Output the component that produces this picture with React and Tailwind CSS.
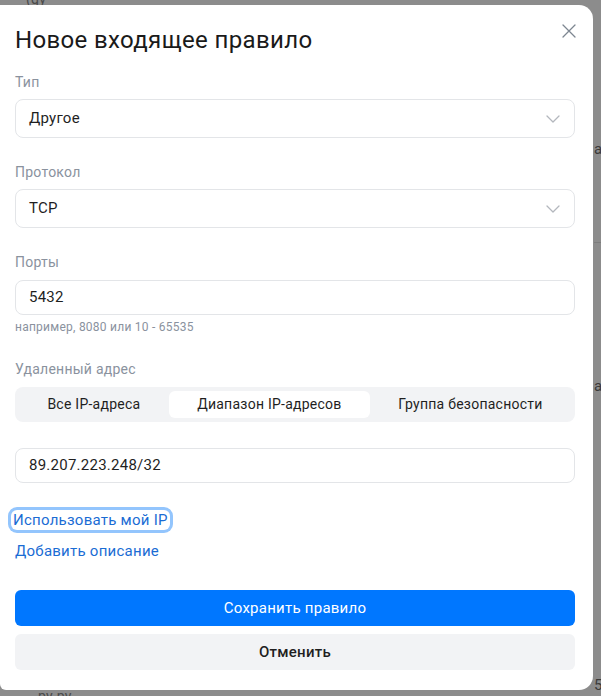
import { useState } from 'react';

const Chevron = () => (
  <svg width="14" height="8" viewBox="0 0 14 8" fill="none" className="shrink-0">
    <polyline points="1,1 7,7 13,1" stroke="#b3b7bd" strokeWidth="1.3" strokeLinecap="round" strokeLinejoin="round" />
  </svg>
);

const Label = ({ children, className = '' }) => (
  <div className={`text-[14px] leading-5 text-[#8a929e] ${className}`}>{children}</div>
);

const SelectBox = ({ value }) => (
  <div className="mt-[7px] h-[39px] rounded-lg border border-[#e3e5e8] flex items-center justify-between pl-[13px] pr-[14px]">
    <span className="text-[15px] text-[#1f1f1f]">{value}</span>
    <Chevron />
  </div>
);

const TextBox = ({ value, className = '' }) => (
  <div className={`h-[35px] rounded-lg border border-[#e3e5e8] flex items-center pl-[13px] ${className}`}>
    <span className="text-[15px] text-[#1f1f1f]">{value}</span>
  </div>
);

const tabs = ['Все IP-адреса', 'Диапазон IP-адресов', 'Группа безопасности'];

export default function App() {
  const [active, setActive] = useState(1);

  return (
    <div className="relative h-[696px] w-[601px] overflow-hidden bg-[#8c8c8c] font-['Roboto',sans-serif] tracking-[0.25px]">
      {/* faint page behind the overlay */}
      <div className="absolute left-[26px] top-[-11px] text-[14px] text-[#4a4a4a]">(gy</div>
      <div className="absolute left-[594px] top-[138px] text-[15px] text-[#3a3a3a]">ал</div>
      <div className="absolute left-[594px] top-[242px] h-px w-[10px] bg-[#7d7d7d]" />
      <div className="absolute left-[594px] top-[375px] text-[15px] text-[#3a3a3a]">ал</div>
      <div className="absolute left-[594px] top-[674px] text-[15px] text-[#3a3a3a]">5</div>
      <div className="absolute left-[38px] top-[686px] text-[14px] text-[#4a4a4a]">ру ру</div>

      <div className="relative mt-[5px] w-[593px] rounded-r-[14px] rounded-bl-[6px] bg-white pl-[15px] pr-[18px] pt-[21px] pb-[20px]">
        <div className="flex items-start justify-between">
          <h1 className="text-[24px] leading-[28px] font-normal tracking-[0.35px] text-[#1a1a1a]">Новое входящее правило</h1>
          <button className="mr-[-5px] mt-[-6px] p-1 text-[#7d8691]">
            <svg width="14" height="14" viewBox="0 0 14 14" fill="none">
              <path d="M1 1 13 13M13 1 1 13" stroke="currentColor" strokeWidth="1.3" strokeLinecap="round" />
            </svg>
          </button>
        </div>

        <Label className="mt-[18px]">Тип</Label>
        <SelectBox value="Другое" />

        <Label className="mt-[24px]">Протокол</Label>
        <SelectBox value="TCP" />

        <Label className="mt-[24px]">Порты</Label>
        <TextBox value="5432" className="mt-[8px]" />
        <div className="mt-[4px] text-[12px] leading-4 text-[#8a929e]">например, 8080 или 10 - 65535</div>

        <Label className="mt-[24px]">Удаленный адрес</Label>
        <div className="mt-[8px] flex h-[35px] rounded-lg bg-[#f2f3f5] p-[4px]">
          {tabs.map((t, i) => (
            <button
              key={t}
              onClick={() => setActive(i)}
              className={`flex-auto rounded-md text-[14px] text-[#1f1f1f] ${i === active ? 'bg-white' : ''}`}
            >
              {t}
            </button>
          ))}
        </div>

        <TextBox value="89.207.223.248/32" className="mt-[26px]" />

        <div className="mt-[27px] flex flex-col items-start">
          <a className="ml-[-4px] rounded-md px-[2px] text-[15px] leading-5 text-[#1a6cd4] ring-[3px] ring-[#93c5fd]">
            Использовать мой IP
          </a>
          <a className="mt-[11px] text-[15px] leading-5 text-[#1a6cd4]">Добавить описание</a>
        </div>

        <button className="mt-[29px] flex h-[36px] w-full items-center justify-center rounded-md bg-[#0077ff] text-[15px] text-white">
          Сохранить правило
        </button>
        <button className="mt-[8px] flex h-[36px] w-full items-center justify-center rounded-md bg-[#f2f3f5] text-[15px] font-medium text-[#1f1f1f]">
          Отменить
        </button>
      </div>
    </div>
  );
}
